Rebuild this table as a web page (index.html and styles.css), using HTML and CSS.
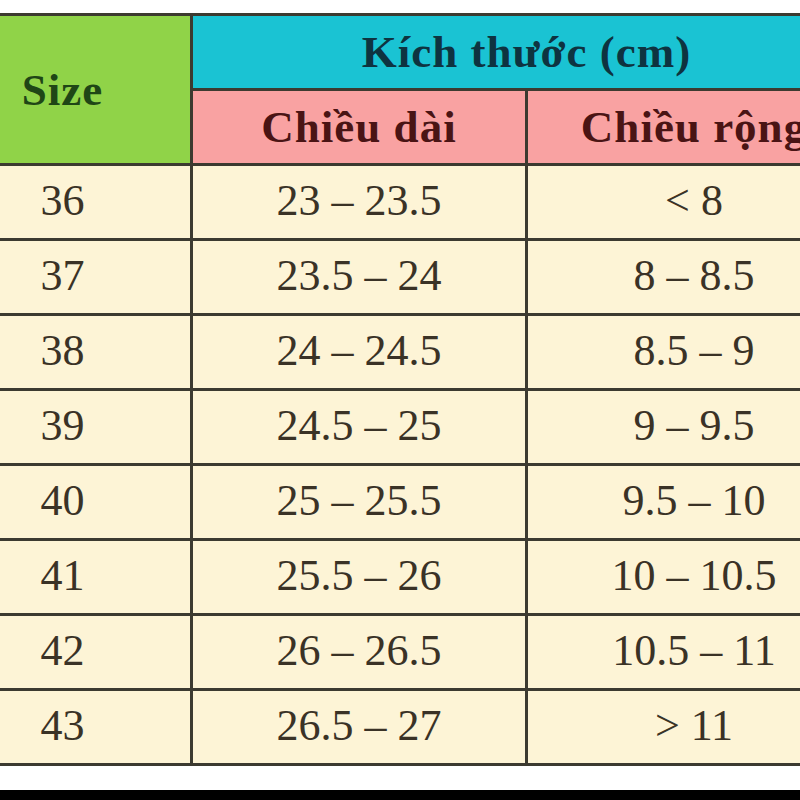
FILE: index.html
```html
<!DOCTYPE html>
<html lang="vi">
<head>
<meta charset="utf-8">
<title>Bảng size</title>
<link rel="stylesheet" href="styles.css">
</head>
<body>
<div class="page">
  <div class="frame">
    <table class="size-table">
      <colgroup>
        <col class="c-size">
        <col class="c-len">
        <col class="c-wid">
      </colgroup>
      <thead>
        <tr class="h1">
          <th class="th-size" rowspan="2">Size</th>
          <th class="th-dim" colspan="2">Kích thước (cm)</th>
        </tr>
        <tr class="h2">
          <th class="th-sub">Chiều dài</th>
          <th class="th-sub">Chiều rộng</th>
        </tr>
      </thead>
      <tbody>
        <tr><td>36</td><td>23 – 23.5</td><td>&lt; 8</td></tr>
        <tr><td>37</td><td>23.5 – 24</td><td>8 – 8.5</td></tr>
        <tr><td>38</td><td>24 – 24.5</td><td>8.5 – 9</td></tr>
        <tr><td>39</td><td>24.5 – 25</td><td>9 – 9.5</td></tr>
        <tr><td>40</td><td>25 – 25.5</td><td>9.5 – 10</td></tr>
        <tr><td>41</td><td>25.5 – 26</td><td>10 – 10.5</td></tr>
        <tr><td>42</td><td>26 – 26.5</td><td>10.5 – 11</td></tr>
        <tr><td>43</td><td>26.5 – 27</td><td>&gt; 11</td></tr>
      </tbody>
    </table>
  </div>
  <div class="black-bar"></div>
</div>
</body>
</html>
```

FILE: styles.css
```css
html, body {
  margin: 0;
  padding: 0;
  background: #ffffff;
}
body {
  width: 800px;
  height: 800px;
  overflow: hidden;
}
.page {
  width: 800px;
  height: 800px;
  display: flex;
  flex-direction: column;
  padding-top: 13px;
  box-sizing: border-box;
}
.frame {
  width: 800px;
  overflow: hidden;
  flex: none;
}
.size-table {
  margin-left: -68px;
  border-collapse: collapse;
  table-layout: fixed;
  width: 928px;
  font-family: "Liberation Serif", "Times New Roman", serif;
  color: #3a3226;
}
.c-size { width: 258px; }
.c-len { width: 335px; }
.c-wid { width: 335px; }
.size-table th,
.size-table td {
  border: 3px solid #3c3a30;
  text-align: center;
  vertical-align: middle;
  padding: 0;
}
.size-table tr { height: 75px; }
.size-table td {
  background: #fdf4d6;
  font-size: 44px;
  font-weight: normal;
  padding-bottom: 4px;
}
.size-table th {
  font-weight: bold;
  font-size: 45px;
  letter-spacing: 1px;
}
.th-size {
  background: #90d348;
  color: #1f4616;
}
.th-dim {
  background: #1ac3d3;
  color: #0e3340;
  padding-bottom: 6px;
}
.th-sub {
  background: #f9a2a2;
  color: #4a1414;
  padding-bottom: 4px;
}
.black-bar {
  margin-top: auto;
  height: 10px;
  background: #000000;
  flex: none;
}
```
